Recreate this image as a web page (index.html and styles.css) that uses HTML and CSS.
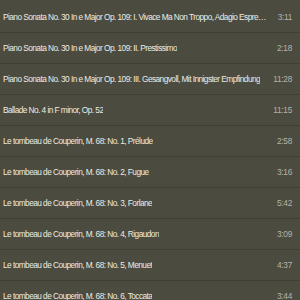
FILE: index.html
```html
<!DOCTYPE html>
<html>
<head>
<meta charset="utf-8">
<link rel="stylesheet" href="styles.css">
</head>
<body>
<ul class="tracks">
  <li class="track"><span class="title">Piano Sonata No. 30 In e Major Op. 109: I. Vivace Ma Non Troppo, Adagio Espressivo</span><span class="time">3:11</span></li>
  <li class="track"><span class="title">Piano Sonata No. 30 In e Major Op. 109: II. Prestissimo</span><span class="time">2:18</span></li>
  <li class="track"><span class="title">Piano Sonata No. 30 In e Major Op. 109: III. Gesangvoll, Mit Innigster Empfindung</span><span class="time">11:28</span></li>
  <li class="track"><span class="title">Ballade No. 4 in F minor, Op. 52</span><span class="time">11:15</span></li>
  <li class="track"><span class="title">Le tombeau de Couperin, M. 68: No. 1, Prélude</span><span class="time">2:58</span></li>
  <li class="track"><span class="title">Le tombeau de Couperin, M. 68: No. 2, Fugue</span><span class="time">3:16</span></li>
  <li class="track"><span class="title">Le tombeau de Couperin, M. 68: No. 3, Forlane</span><span class="time">5:42</span></li>
  <li class="track"><span class="title">Le tombeau de Couperin, M. 68: No. 4, Rigaudon</span><span class="time">3:09</span></li>
  <li class="track"><span class="title">Le tombeau de Couperin, M. 68: No. 5, Menuet</span><span class="time">4:37</span></li>
  <li class="track"><span class="title">Le tombeau de Couperin, M. 68: No. 6, Toccata</span><span class="time">3:44</span></li>
</ul>
</body>
</html>
```
FILE: styles.css
```css
html, body {
  margin: 0;
  padding: 0;
  background: #4b4b3f;
}
.tracks {
  list-style: none;
  margin: 0;
  padding: 2px 0 0 0;
  font-family: "Liberation Sans", Arial, sans-serif;
  font-size: 8.3px;
  letter-spacing: -0.55px;
}
.track {
  display: flex;
  align-items: center;
  justify-content: space-between;
  height: 30px;
  padding: 0 8px 0 3px;
  border-bottom: 1px solid #3f3f35;
}
.title {
  color: #ecece4;
  white-space: nowrap;
  overflow: hidden;
  text-overflow: ellipsis;
  min-width: 0;
  flex: 0 1 auto;
  margin-right: 11px;
}
.time {
  color: #b4b4aa;
  flex: none;
  letter-spacing: -0.3px;
}
```
